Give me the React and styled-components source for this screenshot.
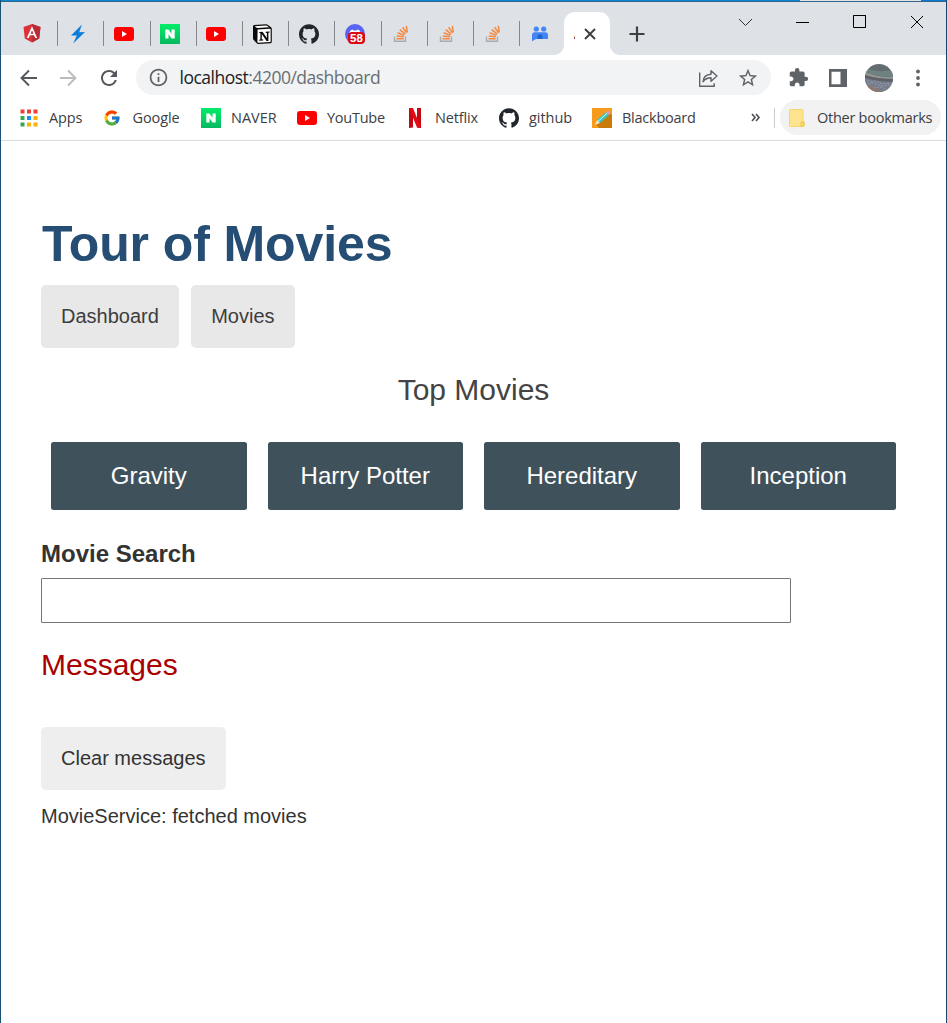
import React from "react";
import styled, { createGlobalStyle } from "styled-components";
import { SiGithub } from "react-icons/si";
import { FcGoogle } from "react-icons/fc";
import { MdExtension, MdStarBorder, MdRefresh, MdInfoOutline } from "react-icons/md";

const GlobalStyle = createGlobalStyle`
  * { box-sizing: border-box; }
  body { margin: 0; background: #fff; font-family: Arial, "Liberation Sans", sans-serif; }
  svg { display: block; flex: none; }
`;

const Window = styled.div`
  width: 947px;
  height: 1023px;
  overflow: hidden;
  display: flex;
  flex-direction: column;
  background: #fff;
  border-left: 1px solid #1a5276;
  border-right: 1px solid #1b4468;
`;

const TopEdge = styled.div`
  flex: none;
  height: 2px;
  margin: 0 -1px;
  background: linear-gradient(90deg, #0a86d2 0 800px, #e4e4e4 800px 921px, #0a78d2 921px);
  border-bottom: 1px solid #33668c;
`;

const TabStrip = styled.div`
  flex: none;
  height: 53px;
  display: flex;
  align-items: flex-end;
  padding-left: 11px;
  background: #dee1e6;
`;

const Tab = styled.div`
  width: 46.2px;
  height: 43px;
  display: flex;
  align-items: center;
  padding-left: 9.5px;
  &::after {
    content: "";
    width: 1px;
    height: 25px;
    margin-left: auto;
    background: ${(p) => (p.$last ? "transparent" : "#85888d")};
  }
`;

const IconBox = styled.span`
  width: ${(p) => p.$w || 20}px;
  height: 20px;
  display: flex;
  align-items: center;
  justify-content: center;
`;

const ActiveTab = styled.div`
  position: relative;
  width: 46px;
  height: 43px;
  margin-left: -2.4px;
  border-radius: 11px 11px 0 0;
  background: #fff;
  display: flex;
  align-items: center;
  gap: 9px;
  padding-left: 10px;
  &::before, &::after {
    content: "";
    position: absolute;
    bottom: 0;
    width: 10px;
    height: 10px;
  }
  &::before { left: -10px; background: radial-gradient(circle at 0 0, transparent 9.5px, #fff 10.3px); }
  &::after { right: -10px; background: radial-gradient(circle at 100% 0, transparent 9.5px, #fff 10.3px); }
`;

const TitleFleck = styled.i`
  width: 1px;
  height: 3px;
  margin-top: 8px;
  background: linear-gradient(#f0c070, #5a2050);
`;

const NewTab = styled.div`
  height: 43px;
  display: flex;
  align-items: center;
  margin-left: 19px;
`;

const WindowControls = styled.div`
  height: 53px;
  margin-left: auto;
  display: flex;
  align-items: flex-start;
  padding: 11px 22px 0 0;
  gap: 43px;
`;

const Toolbar = styled.div`
  flex: none;
  height: 45px;
  display: flex;
  align-items: center;
  padding-left: 18px;
`;

const NavIcons = styled.div`
  width: 117px;
  display: flex;
  align-items: center;
  gap: 19px;
`;

const Omnibox = styled.div`
  width: 635px;
  height: 35px;
  border-radius: 18px;
  background: #f1f3f4;
  display: flex;
  align-items: center;
  padding: 0 12px 0 12px;
  color: #5f6368;
`;

const Url = styled.span`
  margin-left: 10.5px;
  font: 17.5px/35px "Open Sans", "Noto Sans", sans-serif;
  letter-spacing: -0.5px;
  color: #6a6e73;
  b { font-weight: 400; color: #202124; }
`;

const OmniActions = styled.div`
  margin-left: auto;
  display: flex;
  align-items: center;
  gap: 19px;
`;

const ToolActions = styled.div`
  display: flex;
  align-items: center;
  margin-left: 17px;
  color: #5f6368;
`;

const Bookmarks = styled.div`
  flex: none;
  height: 41px;
  display: flex;
  align-items: center;
  padding: 0 5px 5px 17px;
  border-bottom: 1px solid #dadce0;
`;

const Bookmark = styled.div`
  width: ${(p) => p.$w}px;
  height: 35px;
  display: flex;
  align-items: center;
  gap: ${(p) => p.$gap || 10}px;
  font: 14.5px/35px "Open Sans", "Noto Sans", sans-serif;
  letter-spacing: ${(p) => p.$ls || 0}px;
  color: #3c4043;
  white-space: nowrap;
`;

const OtherBookmarks = styled(Bookmark)`
  padding-left: 8px;
  border-radius: 18px;
  background: #f2f2f2;
`;

const Overflow = styled.div`
  margin-left: auto;
`;

const Divider = styled.i`
  width: 1px;
  height: 20px;
  margin: 0 5px 0 13px;
  background: #c8cacd;
`;

const Page = styled.main`
  display: flex;
  flex-direction: column;
  align-items: flex-start;
  padding: 73px 40px 0;
  font-family: "Liberation Sans", Arial, sans-serif;
  font-size: 20px;
  color: #333;
`;

const Title = styled.h1`
  margin: 0;
  padding-left: 1px;
  font-size: 50px;
  line-height: 60px;
  letter-spacing: -0.1px;
  color: #264d73;
`;

const Nav = styled.nav`
  display: flex;
  gap: 12px;
  margin-top: 11px;
`;

const Button = styled.button`
  height: 63px;
  padding: 0 20px;
  border: 0;
  border-radius: 5px;
  font: inherit;
  color: #3d3d3d;
  background: ${(p) => (p.$light ? "#eeeeee" : "#e8e8e8")};
  ${(p) => p.$light && "margin-top: 44px; color: #333;"}
  ${(p) => p.$w && `width: ${p.$w}px;`}
`;

const Heading = styled.h2`
  margin: ${(p) => p.$top}px 0 0;
  align-self: ${(p) => (p.$center ? "center" : "flex-start")};
  font-size: 30px;
  font-weight: 400;
  line-height: 36px;
  color: ${(p) => p.$color};
`;

const Tiles = styled.div`
  align-self: stretch;
  display: grid;
  grid-template-columns: repeat(4, 1fr);
  gap: 21px;
  margin: 34px 10px 0;
`;

const Tile = styled.a`
  height: 68px;
  display: flex;
  align-items: center;
  justify-content: center;
  border-radius: 2.5px;
  background: #3f525c;
  color: #fff;
  font-size: 24px;
`;

const SearchLabel = styled.label`
  margin-top: 30px;
  font-size: 24px;
  font-weight: 700;
  line-height: 28px;
`;

const SearchInput = styled.input`
  width: 750px;
  height: 45px;
  margin: 10px 0 0;
  border: 1px solid #767676;
  border-radius: 1px;
  outline: 0;
`;

const Message = styled.div`
  margin-top: 14px;
  line-height: 24px;
`;

const Angular = () => (
  <svg width="18" height="19" viewBox="0 0 18 19">
    <path d="M9 0 17.5 3 16.2 14.4 9 18.5 1.8 14.4.5 3Z" fill="#dd3139" />
    <path d="M9 0 17.5 3 16.2 14.4 9 18.5Z" fill="#b92b35" />
    <path d="M9 2.200 3.800 14h2L6.900 11.300h4.200L12.200 14h2ZM9 6.200 10.500 9.700h-3Z" fill="#fff" fillRule="evenodd" />
  </svg>
);

const Bolt = () => (
  <svg width="16" height="20" viewBox="0 0 16 20">
    <path d="M12 .5 1 11.600h5.800L3.200 19.500 15 8 9.200 8.200Z" fill="#0a7ddb" />
  </svg>
);

const YouTube = () => (
  <svg width="20" height="14" viewBox="0 0 20 14">
    <rect width="20" height="14" rx="3" fill="#f00" />
    <path d="M8 4v6l5-3Z" fill="#fff" />
  </svg>
);

const Naver = () => (
  <svg width="20" height="20" viewBox="0 0 20 20">
    <defs>
      <linearGradient id="naver" x2="0" y2="1">
        <stop stopColor="#02ed68" />
        <stop offset="1" stopColor="#08b860" />
      </linearGradient>
    </defs>
    <rect width="20" height="20" fill="url(#naver)" />
    <path d="M5.300 5.500h3.200l3 4.300V5.500h3.200v9h-3.200l-3-4.300v4.300H5.300Z" fill="#fff" />
  </svg>
);

const Github = () => <SiGithub size={20} color="#20262c" />;

const Notion = () => (
  <svg width="20" height="20" viewBox="0 0 20 20">
    <path d="M1 2.200Q1 1 2.200.9L14 .2q1 0 1.700.5l3.300 2.500q.8.500.8 1.500v13q0 1.400-1.300 1.500L6 19.900q-1 0-1.500-.8L1.300 15.500Q1 15 1 14Z" fill="#0a0a0a" />
    <path d="m2.600 2.200 11.400-.8q.6 0 1 .3l2 1.500-11.700.8q-.6 0-1-.4Z" fill="#fff" />
    <path d="M5.600 5.500 18 4.800q.6 0 .6.600v12q0 .6-.6.700L6 18.700q-.6 0-.6-.6Z" fill="#fff" />
    <path d="M7.200 7.900 10.500 7.700l4.400 6.400V9l-1.300-.3v-1l4-.2v.9l-1.200.4v8.100l-1.900.1-4.700-6.900v5.200l1.400.3v.9l-4 .2v-.9l1.200-.4V9l-1.200-.2Z" fill="#0a0a0a" />
  </svg>
);

const Discord = () => (
  <svg width="20" height="20" viewBox="0 0 20 20">
    <circle cx="10" cy="10" r="10" fill="#5865f2" />
    <path d="M4 10q.5-3.500 3.500-4.400l1 .9h3l1-.9Q15.500 6.500 16 10v3H4Z" fill="#fff" />
    <rect x="3" y="8" width="17" height="12" rx="4" fill="#d90b12" />
    <text x="11.500" y="18" fill="#fff" fontFamily="Liberation Sans, Arial, sans-serif" fontSize="11.500" fontWeight="700" textAnchor="middle">58</text>
  </svg>
);

const StackOverflow = () => (
  <svg width="16" height="18" viewBox="0 0 16 18" fill="none">
    <path d="M1.500 11.500v4.700h11v-4.700" stroke="#a9acb0" strokeWidth="1.400" />
    <path d="M3.500 13.700h7.200M3.700 10.900l7.100.9M4.600 7.800l6.700 2.600M6.700 4.700l5.500 4.500M9.600 2.200l4 5.700M13.300.8l1 6.500" stroke="#f48840" strokeWidth="1.500" />
  </svg>
);

const Group = () => (
  <svg width="18" height="16" viewBox="0 0 18 16" fill="#4285f4">
    <circle cx="5.300" cy="3" r="2.600" />
    <circle cx="12.700" cy="3" r="2.600" />
    <path d="M1 9q0-2.700 3-2.700h10q3 0 3 2.700v4H5L1 15.300Z" />
    <path d="M6.500 13v-2.500q0-2.200 2.500-2.200t2.500 2.200V13Z" fill="#1f66cc" />
  </svg>
);

const Apps = () => (
  <svg width="18" height="18" viewBox="0 0 18 18">
    {["#ea4335", "#ea4335", "#ea4335", "#34a853", "#1a8cff", "#fbb205", "#34a853", "#fbb205", "#fbb205"].map((c, i) => (
      <rect key={i} x={(i % 3) * 6.5 + 0.5} y={Math.floor(i / 3) * 6.5 + 0.5} width="4" height="4" fill={c} />
    ))}
  </svg>
);

const Netflix = () => (
  <svg width="12" height="20" viewBox="0 0 12 20">
    <path d="M0 0h4v19.500L0 20ZM8 0h4v20l-4-.5Z" fill="#c30a14" />
    <path d="M0 0h4l8 20-4-.5Z" fill="#e50914" />
  </svg>
);

const Blackboard = () => (
  <svg width="20" height="20" viewBox="0 0 20 20">
    <rect width="20" height="20" fill="#f89a1c" />
    <path d="M17 4 20 7v13H7L4 16Z" fill="#c97a08" />
    <path d="m5 12 9-8 3 3-9 8Z" fill="#35c7c0" />
    <path d="m6.200 13.200 9-8" stroke="#d9fff2" strokeWidth="1" />
    <path d="m3 17 2-5 3 3Z" fill="#f7e3bd" />
    <path d="m14 4 1.500-1.200q2.500.2 2.700 2.900L17 7Z" fill="#d99bd8" />
  </svg>
);

const Arrow = ({ flip }) => (
  <svg width="20" height="20" viewBox="0 0 20 20" fill="none" stroke={flip ? "#babcbe" : "#55585d"} strokeWidth="1.900">
    <path d={flip ? "M2 10h15M10 2.500l7.500 7.500-7.500 7.500" : "M18 10H3M10 2.500 2.500 10l7.500 7.500"} />
  </svg>
);

const Share = () => (
  <svg width="20" height="20" viewBox="0 0 20 20" fill="none" stroke="#5f6368" strokeWidth="1.400">
    <path d="M1.700 4.500v13.800h14.500v-3" />
    <path d="M5 13.700Q5.500 6.700 13 6.200V2.700l6 5.300-6 5.200V9.800q-5 0-8 3.900Z" strokeLinejoin="round" />
  </svg>
);

const SidePanel = () => (
  <svg width="18" height="18" viewBox="0 0 18 18">
    <path d="M0 0h18v18H0Zm2.500 2.700v12.600h9V2.700Z" fill="#5f6368" fillRule="evenodd" />
  </svg>
);

const Photo = () => (
  <svg width="28" height="28" viewBox="0 0 28 28">
    <defs>
      <clipPath id="round"><circle cx="14" cy="14" r="14" /></clipPath>
    </defs>
    <g clipPath="url(#round)">
      <path d="M0 0h28v28H0Z" fill="#626c71" />
      <path d="M0 4q12 5 28 2v7Q12 13 0 8Z" fill="#6d8281" />
      <path d="M0 8q12 6 28 5v2Q12 15 0 11Z" fill="#989894" />
      <path d="M0 11q12 4 28 4v3Q12 17 0 14Z" fill="#5f6168" />
      <path d="M0 14q14 4 28 4v10H0Z" fill="#767d8c" />
      <path d="m2 17 5 1 4-1 6 3 8-1M3 20l6-1 7 3 9-1M8 24l8-1 5 2" stroke="#969dab" strokeWidth=".9" strokeDasharray="2 1.500" fill="none" />
      <path d="M3 21q9 4 15 7H3Z" fill="#92766a" />
    </g>
  </svg>
);

const Dots = () => (
  <svg width="4" height="18" viewBox="0 0 4 18" fill="#5f6368">
    <circle cx="2" cy="2.500" r="1.900" /><circle cx="2" cy="9" r="1.900" /><circle cx="2" cy="15.500" r="1.900" />
  </svg>
);

const Folder = () => (
  <svg width="18" height="20" viewBox="0 0 18 20">
    <path d="M1.500 2.500q0-1 1-1h11q1.500 0 1.500 1V14h1v4q0 .5-.5.500h-13q-1 0-1-1Z" fill="#ffe48f" stroke="#f5d568" />
    <path d="M13 18.500V15q0-1.500 1.500-1.500T16 15v2q0 1.500-1.500 1.500Z" fill="#fbdb68" stroke="#ecc544" />
  </svg>
);

const TABS = [Angular, Bolt, YouTube, Naver, YouTube, Notion, Github, Discord, StackOverflow, StackOverflow, StackOverflow, Group];

const BOOKMARKS = [
  { label: "Apps", icon: Apps, w: 84, iconW: 22, gap: 9, ls: -0.1 },
  { label: "Google", icon: () => <FcGoogle size={18} />, w: 99, gap: 10.5, ls: -0.1 },
  { label: "NAVER", icon: Naver, w: 96 },
  { label: "YouTube", icon: YouTube, w: 108, ls: -0.25 },
  { label: "Netflix", icon: Netflix, w: 94, ls: -0.15 },
  { label: "github", icon: Github, w: 93, ls: -0.05 },
  { label: "Blackboard", icon: Blackboard, w: 120, ls: -0.25 },
];

const MOVIES = ["Gravity", "Harry Potter", "Hereditary", "Inception"];

export default function App() {
  return (
    <>
      <GlobalStyle />
      <Window>
        <TopEdge />
        <TabStrip>
          {TABS.map((Icon, i) => (
            <Tab key={i} $last={i === TABS.length - 1}>
              <IconBox><Icon /></IconBox>
            </Tab>
          ))}
          <ActiveTab>
            <TitleFleck />
            <svg width="12" height="12" viewBox="0 0 12 12" stroke="#3c4043" strokeWidth="2"><path d="m1 1 10 10M11 1 1 11" /></svg>
          </ActiveTab>
          <NewTab>
            <svg width="16" height="16" viewBox="0 0 16 16" stroke="#3c4043" strokeWidth="2.200"><path d="M8 .5v15M.5 8h15" /></svg>
          </NewTab>
          <WindowControls>
            <svg width="15" height="15" viewBox="0 0 15 15" fill="none" stroke="#333" strokeWidth="1"><path d="m1 6 6.500 6.500L14 6" /></svg>
            <svg width="14" height="15" viewBox="0 0 14 15" stroke="#000"><path d="M0 9.500h13" /></svg>
            <svg width="14" height="15" viewBox="0 0 14 15" fill="none" stroke="#000"><path d="M.5 3.500h12v12" transform="translate(0 -1)" /><path d="M.5 2.500v12h12v-12Z" /></svg>
            <svg width="14" height="15" viewBox="0 0 14 15" stroke="#000"><path d="m1 3 12 12M13 3 1 15" /></svg>
          </WindowControls>
        </TabStrip>
        <Toolbar>
          <NavIcons>
            <Arrow />
            <Arrow flip />
            <MdRefresh size={24} color="#55585d" />
          </NavIcons>
          <Omnibox>
            <MdInfoOutline size={21} />
            <Url><b>localhost</b>:4200/dashboard</Url>
            <OmniActions>
              <Share />
              <MdStarBorder size={22} />
            </OmniActions>
          </Omnibox>
          <ToolActions>
            <MdExtension size={21} />
            <IconBox $w={58}><SidePanel /></IconBox>
            <IconBox $w={24}><Photo /></IconBox>
            <IconBox $w={54}><Dots /></IconBox>
          </ToolActions>
        </Toolbar>
        <Bookmarks>
          {BOOKMARKS.map(({ label, icon: Icon, w, gap, ls, iconW }) => (
            <Bookmark key={label} $w={w} $gap={gap} $ls={ls}>
              <IconBox $w={iconW}><Icon /></IconBox>
              {label}
            </Bookmark>
          ))}
          <Overflow>
            <svg width="10" height="9" viewBox="0 0 10 9" fill="none" stroke="#4b4f54" strokeWidth="1.600"><path d="m1 1 3 3.500L1 8M5 1l3 3.500L5 8" /></svg>
          </Overflow>
          <Divider />
          <OtherBookmarks $w={161} $gap={11} $ls={-0.26}>
            <Folder />
            Other bookmarks
          </OtherBookmarks>
        </Bookmarks>
        <Page>
          <Title>Tour of Movies</Title>
          <Nav>
            <Button>Dashboard</Button>
            <Button $w={104}>Movies</Button>
          </Nav>
          <Heading $top={24} $center $color="#444">Top Movies</Heading>
          <Tiles>
            {MOVIES.map((m) => <Tile key={m}>{m}</Tile>)}
          </Tiles>
          <SearchLabel htmlFor="search">Movie Search</SearchLabel>
          <SearchInput id="search" />
          <Heading $top={24} $color="#a80000">Messages</Heading>
          <Button $light>Clear messages</Button>
          <Message>MovieService: fetched movies</Message>
        </Page>
      </Window>
    </>
  );
}
